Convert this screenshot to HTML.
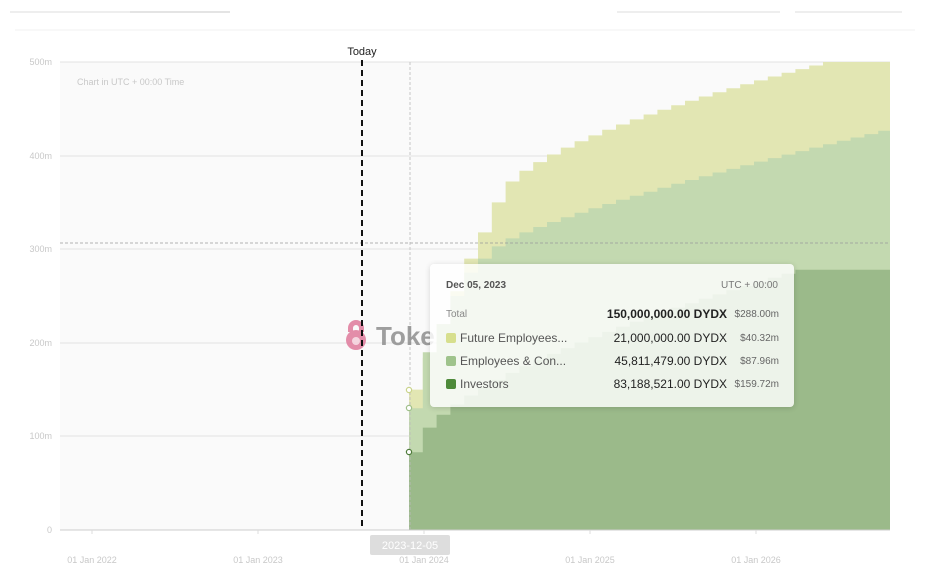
<!DOCTYPE html>
<html><head><meta charset="utf-8"><style>
html,body{margin:0;padding:0;background:#fff;width:932px;height:581px;overflow:hidden;font-family:"Liberation Sans",sans-serif}
.tt{position:absolute;left:430px;top:264px;width:364px;height:143px;background:rgba(255,255,255,0.82);border-radius:4px;box-shadow:0 1px 6px rgba(0,0,0,0.15)}
.tt div{position:absolute;font-size:11px;white-space:nowrap}
.sw{width:10px;height:10px;border-radius:2px;display:inline-block;vertical-align:-1px;margin-right:4px}
</style></head><body>
<svg width="932" height="581" style="position:absolute;left:0;top:0" font-family="Liberation Sans, sans-serif">
<line x1="10" y1="12" x2="130" y2="12" stroke="#eee" stroke-width="2"/>
<line x1="130" y1="12" x2="230" y2="12" stroke="#e4e4e4" stroke-width="2"/>
<line x1="617" y1="12" x2="780" y2="12" stroke="#eee" stroke-width="2"/>
<line x1="795" y1="12" x2="902" y2="12" stroke="#eee" stroke-width="2"/>
<line x1="15" y1="30" x2="915" y2="30" stroke="#f2f2f2"/>
<rect x="60" y="62" width="830" height="468" fill="#fafafa"/>
<g stroke="#e3e3e3" stroke-width="1">
<line x1="60" y1="62" x2="890" y2="62"/><line x1="60" y1="156" x2="890" y2="156"/>
<line x1="60" y1="249" x2="890" y2="249"/><line x1="60" y1="343" x2="890" y2="343"/>
<line x1="60" y1="436" x2="890" y2="436"/></g>
<g id="areas"></g>
<line x1="60" y1="530" x2="890" y2="530" stroke="#ccc"/>
<g stroke="#ddd"><line x1="92" y1="530" x2="92" y2="534"/><line x1="258" y1="530" x2="258" y2="534"/><line x1="424" y1="530" x2="424" y2="534"/><line x1="590" y1="530" x2="590" y2="534"/><line x1="756" y1="530" x2="756" y2="534"/></g>
<g font-size="9" fill="#c8c8c8" text-anchor="end">
<text x="52" y="65">500m</text><text x="52" y="159">400m</text><text x="52" y="252">300m</text><text x="52" y="346">200m</text><text x="52" y="439">100m</text><text x="52" y="533">0</text></g>
<text x="77" y="85" font-size="9" fill="#c8c8c8">Chart in UTC + 00:00 Time</text>
<g font-size="9" fill="#c8c8c8" text-anchor="middle">
<text x="92" y="563">01 Jan 2022</text><text x="258" y="563">01 Jan 2023</text><text x="424" y="563">01 Jan 2024</text><text x="590" y="563">01 Jan 2025</text><text x="756" y="563">01 Jan 2026</text></g>
<line x1="60" y1="243" x2="890" y2="243" stroke="#999" stroke-dasharray="3,2" stroke-width="0.8"/>
<line x1="410" y1="62" x2="410" y2="530" stroke="#bbb" stroke-dasharray="3,2" stroke-width="0.8"/>
<g opacity="0.85">
<path d="M348 328 a8 8 0 0 1 16 0 v4 h-5 v-4 a3 3 0 0 0 -6 0 v4 h-5z" fill="#e07a9c"/>
<circle cx="356" cy="340" r="10" fill="#e07a9c"/>
<circle cx="356" cy="341" r="4" fill="#f5d0dc"/>
</g>
<text x="376" y="345" font-size="26" font-weight="bold" fill="#888" opacity="0.8">Toke</text>
<line x1="362" y1="60" x2="362" y2="530" stroke="#111" stroke-width="2" stroke-dasharray="6,4"/>
<text x="362" y="55" font-size="11" fill="#222" text-anchor="middle">Today</text>
<rect x="370" y="535" width="80" height="20" rx="2" fill="#ddd"/>
<text x="410" y="549" font-size="11" fill="#fff" text-anchor="middle">2023-12-05</text>
<circle cx="409" cy="390" r="2.6" fill="#fff" stroke="#c9d38a" stroke-width="1.2"/>
<circle cx="409" cy="408" r="2.6" fill="#fff" stroke="#9fbf8a" stroke-width="1.2"/>
<circle cx="409" cy="452" r="2.6" fill="#fff" stroke="#4e7a3a" stroke-width="1.2"/>
</svg>
<div class="tt">
<div style="left:16px;top:16px;color:#555;font-size:10px;font-weight:bold">Dec 05, 2023</div>
<div style="right:16px;top:16px;color:#777;font-size:10px">UTC + 00:00</div>
<div style="left:16px;top:45px;color:#888;font-size:10px">Total</div>
<div style="right:67px;top:43px;color:#222;font-size:12px;font-weight:bold">150,000,000.00 DYDX</div>
<div style="right:15px;top:45px;color:#666;font-size:10px">$288.00m</div>
<div style="left:16px;top:67px;color:#555;font-size:12px"><span class="sw" style="background:#d7df8e"></span>Future Employees...</div>
<div style="right:67px;top:67px;color:#222;font-size:12px">21,000,000.00 DYDX</div>
<div style="right:15px;top:69px;color:#666;font-size:10px">$40.32m</div>
<div style="left:16px;top:90px;color:#555;font-size:12px"><span class="sw" style="background:#9fc38c"></span>Employees &amp; Con...</div>
<div style="right:67px;top:90px;color:#222;font-size:12px">45,811,479.00 DYDX</div>
<div style="right:15px;top:92px;color:#666;font-size:10px">$87.96m</div>
<div style="left:16px;top:113px;color:#555;font-size:12px"><span class="sw" style="background:#4e8a3a"></span>Investors</div>
<div style="right:67px;top:113px;color:#222;font-size:12px">83,188,521.00 DYDX</div>
<div style="right:15px;top:115px;color:#666;font-size:10px">$159.72m</div>
</div>
<script>
(function(){
var x0=409,w=13.8,N=35,xe=890;
function Y(v){return 530-v*0.936;}
function tot(i){var a=[150,184,220,255,290,318];if(i<6)return a[i];return Math.min(500,350+150*Math.pow((i-6)/24,0.6));}
function lig(i){var a=[130,190,220,250,275,290];if(i<6)return a[i];return 303+127*Math.pow((i-6)/29,0.8);}
function drk(i){if(i==0)return 83;return 83+195*Math.pow(Math.min(i,28)/28,0.6);}
function path(f){var d="M"+x0+" 530";for(var i=0;i<=N;i++){var xa=x0+i*w,xb=Math.min(xe,x0+(i+1)*w);if(xa>=xe)break;var y=Y(f(i)).toFixed(1);d+=" L"+xa.toFixed(1)+" "+y+" L"+xb.toFixed(1)+" "+y;}d+=" L"+xe+" 530 Z";return d;}
var g=document.getElementById("areas");
g.innerHTML='<path d="'+path(tot)+'" fill="#e2e6b3"/><path d="'+path(lig)+'" fill="#c3d9b0"/><path d="'+path(drk)+'" fill="#9bba8a"/>';
})();
</script>
</body></html>
